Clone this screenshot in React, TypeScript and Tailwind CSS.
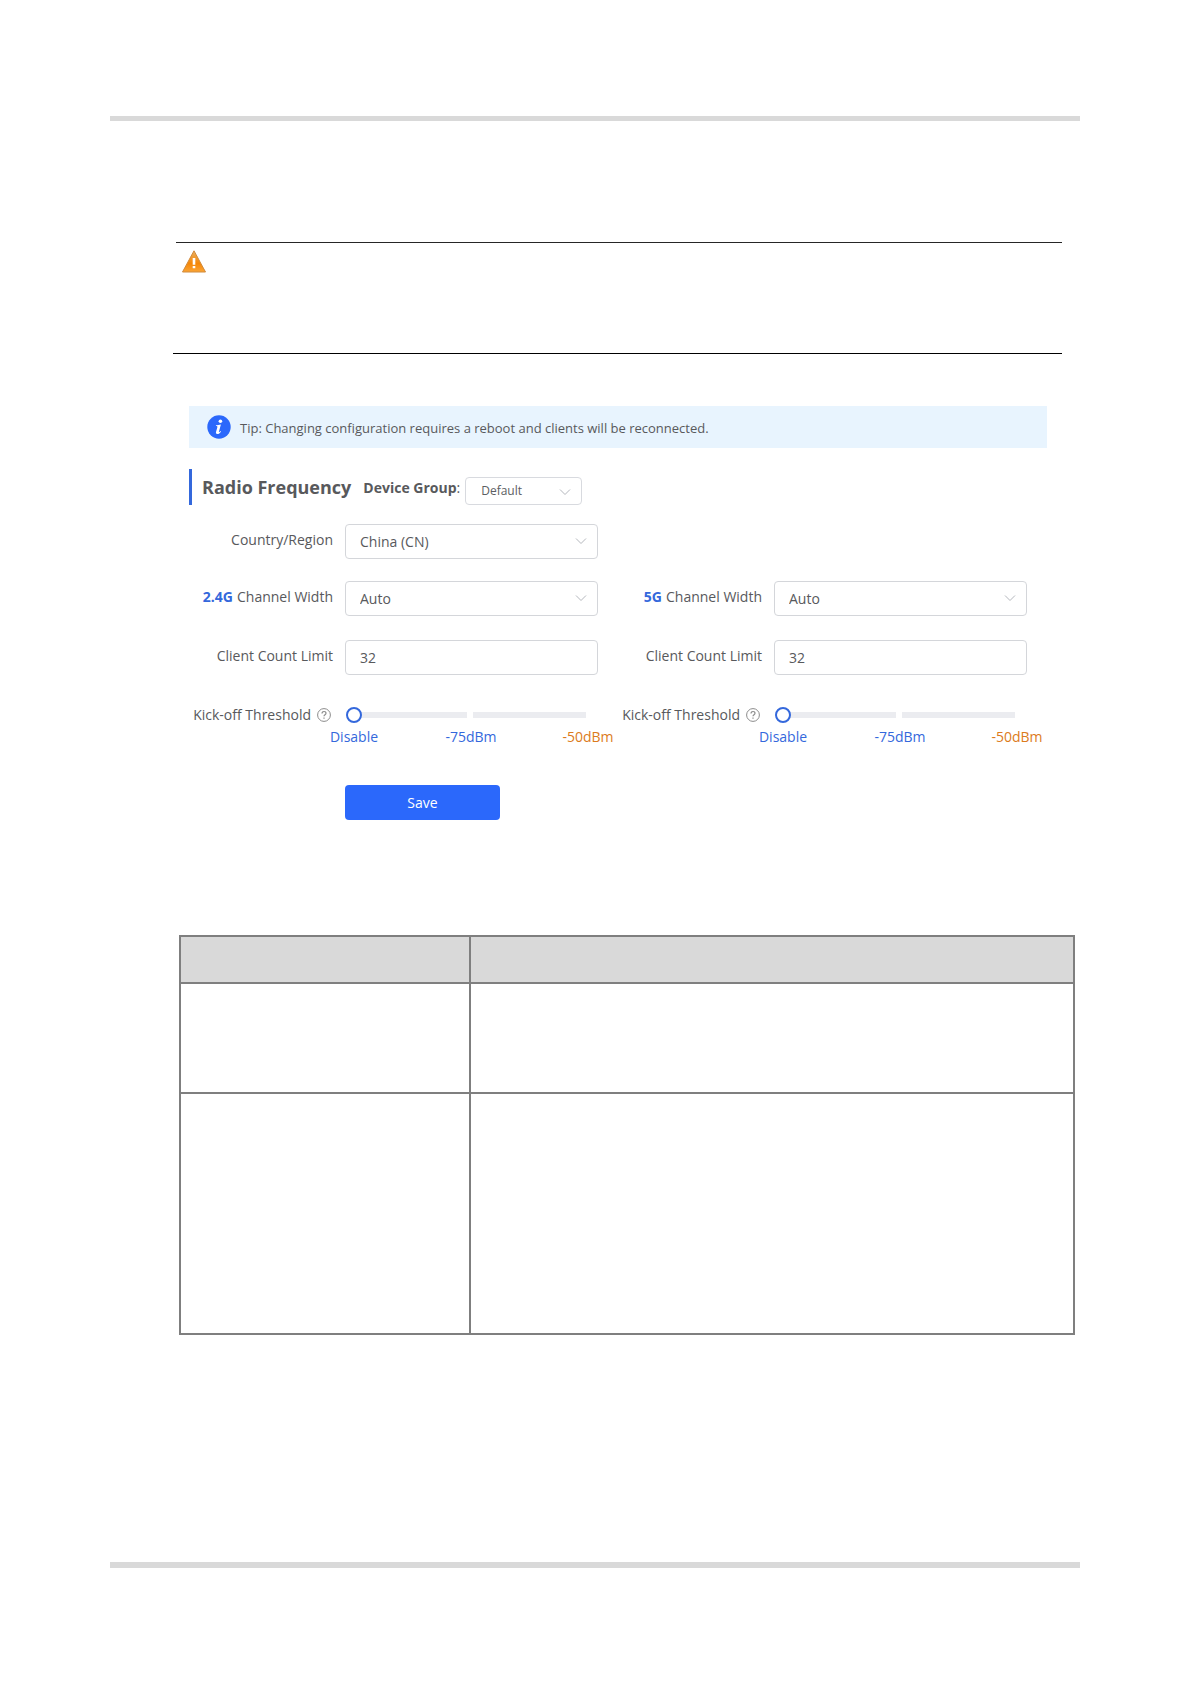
import type { ReactNode } from 'react'

const bands = [
  { id: 'band-24', name: '2.4G' },
  { id: 'band-5', name: '5G' },
]

const marks = [
  { label: 'Disable', color: 'text-[#3468dc]' },
  { label: '-75dBm', color: 'text-[#3468dc]' },
  { label: '-50dBm', color: 'text-[#dc7b1c]' },
]

const tableRows = ['h-[110px]', 'h-[241px]']

function WarningIcon() {
  return (
    <svg width="24" height="23" viewBox="0 0 24 23" role="img" aria-label="Caution">
      <defs>
        <linearGradient id="warning-fill" x1="0" y1="0" x2="0" y2="1">
          <stop offset="0" stopColor="#eab060" />
          <stop offset="0.6" stopColor="#f58708" />
          <stop offset="1" stopColor="#fba535" />
        </linearGradient>
      </defs>
      <path
        d="M12 .8 23.5 22H.5Z"
        fill="url(#warning-fill)"
        stroke="#d08a3c"
        strokeWidth="1"
        strokeLinejoin="round"
      />
      <path d="M10.7 8h2.6v6.800h-2.600zM10.700 16h2.600v2.200h-2.600z" fill="#fff" />
    </svg>
  )
}

function InfoIcon() {
  return (
    <svg width="24" height="24" viewBox="0 0 24 24" aria-hidden="true" className="shrink-0">
      <circle cx="12" cy="12" r="11.7" fill="#2b68fb" />
      <circle cx="13.4" cy="6.2" r="1.8" fill="#fff" />
      <path
        d="M9 10.3c1.6-.1 2.8-.4 4.9-.9l-2 7.3c-.2.8.4.6 1.5-.7l.6.4c-1.2 1.9-2.3 2.7-3.6 2.7-1.2 0-1.7-.8-1.4-2l1.3-4.7c.2-.9 0-1.2-1.4-1.3Z"
        fill="#fff"
      />
    </svg>
  )
}

function HelpIcon() {
  return (
    <svg
      width="14"
      height="14"
      viewBox="0 0 14 14"
      fill="none"
      stroke="#8c8c8c"
      aria-hidden="true"
      className="shrink-0"
    >
      <circle cx="7" cy="7" r="6.4" />
      <path d="M5 5.6C5 4.200 5.900 3.500 7 3.500s2 .7 2 1.800c0 1.400-2 1.500-2 3" strokeWidth="1.2" />
      <path d="M7 9.5v1.2" strokeWidth="1.2" />
    </svg>
  )
}

function Chevron({ className }: { className: string }) {
  return (
    <svg
      width="12"
      height="8"
      viewBox="0 0 12 8"
      fill="none"
      stroke="#b4b7bd"
      aria-hidden="true"
      className={`pointer-events-none absolute ${className}`}
    >
      <path d="M1 1.5 6 6.5l5-5" />
    </svg>
  )
}

function Select({ id, value, small }: { id: string; value: string; small?: boolean }) {
  return (
    <div className={small ? 'relative w-[117px] self-end' : 'relative'}>
      <select
        id={id}
        defaultValue={value}
        className={
          small
            ? 'block h-7 w-full appearance-none rounded border border-[#d8dadf] bg-white pl-[15px] text-xs text-[#5c5e62]'
            : 'block h-[35px] w-full appearance-none rounded border border-[#d4d6da] bg-white pl-[14px] text-sm text-[#58595c]'
        }
      >
        <option>{value}</option>
      </select>
      <Chevron className={small ? 'top-[11px] right-[11px]' : 'top-[13px] right-[11px]'} />
    </div>
  )
}

function Field({ id, label, children }: { id: string; label: ReactNode; children: ReactNode }) {
  return (
    <div className="flex gap-3 pr-5">
      <label
        htmlFor={id}
        className="flex h-8 w-36 shrink-0 items-center justify-end gap-1 whitespace-nowrap text-sm"
      >
        {label}
      </label>
      <div className="min-w-0 flex-1">{children}</div>
    </div>
  )
}

function ThresholdSlider({ id }: { id: string }) {
  return (
    <div className="mr-[10px] ml-[9px]">
      <div className="relative flex h-8 items-center gap-[6px]">
        <div className="h-[6px] flex-1 bg-[#ebecf0]" />
        <div className="mr-[2px] h-[6px] flex-1 bg-[#ebecf0]" />
        <input
          id={id}
          type="range"
          min={0}
          max={2}
          defaultValue={0}
          className="absolute inset-y-0 -inset-x-2 appearance-none bg-transparent [&::-webkit-slider-thumb]:size-4 [&::-webkit-slider-thumb]:appearance-none [&::-webkit-slider-thumb]:rounded-full [&::-webkit-slider-thumb]:border-2 [&::-webkit-slider-thumb]:border-[#3468dc] [&::-webkit-slider-thumb]:bg-white"
        />
      </div>
      <div className="-mt-1 flex justify-between text-sm">
        {marks.map((mark) => (
          <span key={mark.label} className={`flex w-0 justify-center whitespace-nowrap ${mark.color}`}>
            {mark.label}
          </span>
        ))}
      </div>
    </div>
  )
}

export default function App() {
  return (
    <div className="bg-white pt-[116px] pr-[111px] pb-[116px] pl-[110px] font-['Open_Sans','Noto_Sans',sans-serif] text-[#58595c]">
      <div className="h-[5px] bg-[#d9d9d9]" />

      <main className="pr-[5px] pl-[69px]">
        {/* Caution block */}
        <section className="mt-[121px] mr-[13px] -ml-[6px] border-b border-black">
          <div className="ml-[3px] h-[111px] border-t border-[#262626] pt-[7px] pl-[6px]">
            <WarningIcon />
          </div>
        </section>

        <form className="mt-[52px] mr-7 ml-[10px]" onSubmit={(e) => e.preventDefault()}>
          <div className="flex h-[42px] items-center gap-[9px] bg-[#e8f4fe] pl-[18px]">
            <InfoIcon />
            <p className="pt-1 text-[13px]">
              Tip: Changing configuration requires a reboot and clients will be reconnected.
            </p>
          </div>

          <div className="mt-[21px] flex h-9 items-center border-l-3 border-[#3468dc] pl-[10px]">
            <h2 className="text-lg font-bold">Radio Frequency</h2>
            <label htmlFor="device-group" className="mr-[5px] ml-3 pt-[2px] text-sm">
              <b>Device Group</b>:
            </label>
            <Select id="device-group" value="Default" small />
          </div>

          <div className="mt-[19px] grid grid-cols-2">
            <Field id="country" label="Country/Region">
              <Select id="country" value="China (CN)" />
            </Field>
          </div>

          <div className="mt-[22px] grid grid-cols-2">
            {bands.map((band) => (
              <div key={band.id} className="flex flex-col gap-6">
                <Field
                  id={`${band.id}-width`}
                  label={
                    <>
                      <b className="text-[#3468dc]">{band.name}</b> Channel Width
                    </>
                  }
                >
                  <Select id={`${band.id}-width`} value="Auto" />
                </Field>
                <Field id={`${band.id}-limit`} label="Client Count Limit">
                  <input
                    id={`${band.id}-limit`}
                    type="text"
                    defaultValue="32"
                    className="block h-[35px] w-full rounded border border-[#d4d6da] pl-[14px] text-sm"
                  />
                </Field>
                <Field
                  id={`${band.id}-kick`}
                  label={
                    <span className="flex items-center gap-[6px] pr-[2px]">
                      Kick-off Threshold <HelpIcon />
                    </span>
                  }
                >
                  <ThresholdSlider id={`${band.id}-kick`} />
                </Field>
              </div>
            ))}
          </div>

          <button
            type="submit"
            className="mt-[38px] ml-[156px] block h-[35px] w-[155px] rounded bg-[#2b68fb] text-sm text-white"
          >
            Save
          </button>
        </form>

        <table className="mt-[115px] w-full table-fixed border-collapse">
          <thead>
            <tr className="h-[47px] bg-[#d9d9d9]">
              <th className="w-[290px] border-2 border-[#7f7f7f]" />
              <th className="border-2 border-[#7f7f7f]" />
            </tr>
          </thead>
          <tbody>
            {tableRows.map((height) => (
              <tr key={height} className={height}>
                <td className="border-2 border-[#7f7f7f]" />
                <td className="border-2 border-[#7f7f7f]" />
              </tr>
            ))}
          </tbody>
        </table>
      </main>

      <div className="mt-[227px] h-[6px] bg-[#d9d9d9]" />
    </div>
  )
}
